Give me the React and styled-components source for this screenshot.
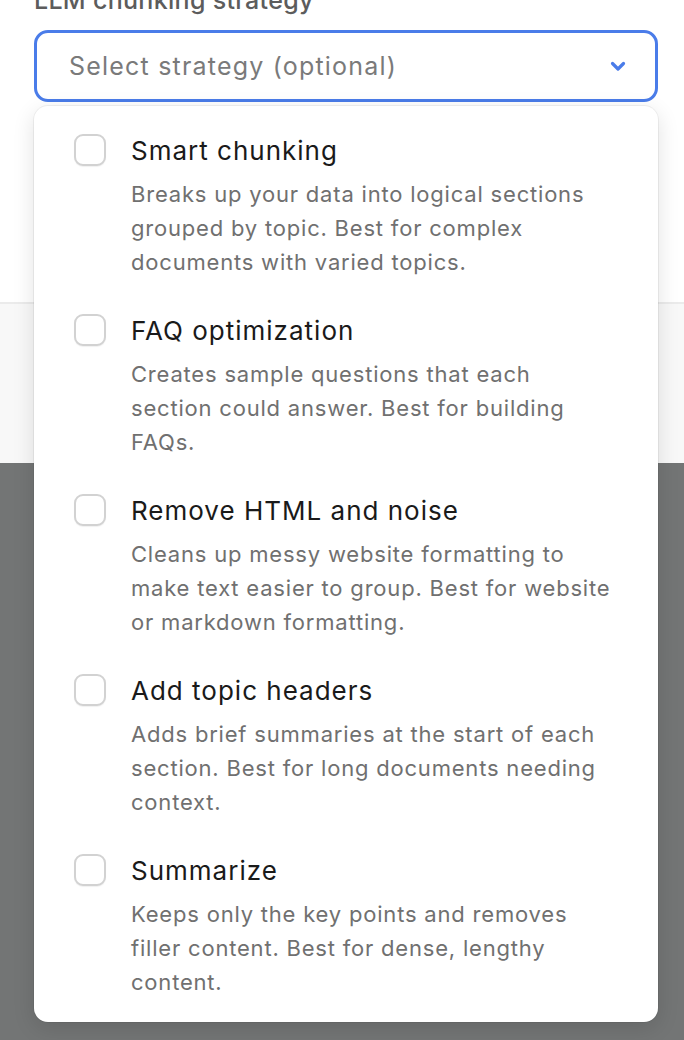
import React from "react";
import styled, { createGlobalStyle } from "styled-components";

const GlobalStyle = createGlobalStyle`
  html, body {
    margin: 0;
    padding: 0;
    background: #737575;
    overflow: hidden;
  }
  * {
    box-sizing: border-box;
  }
`;

const Backdrop = styled.div`
  min-height: 1040px;
  background: #737575;
`;

const Modal = styled.div`
  margin: 0 -20px;
  background: #fff;
  border-radius: 0 0 18px 18px;
`;

const Body = styled.div`
  display: flow-root;
  height: 302px;
  padding: 0 46px 0 54px;
`;

const Footer = styled.div`
  height: 161px;
  background: #f8f8f8;
  border-top: 2px solid #ebebeb;
  border-radius: 0 0 18px 18px;
`;

const Label = styled.div`
  margin-top: -14px;
  font-family: Inter, Roboto, sans-serif;
  font-size: 25px;
  line-height: 28px;
  font-weight: 500;
  letter-spacing: 0.3px;
  color: #5c5c5c;
`;

const Field = styled.div`
  position: relative;
  margin-top: 16px;
`;

const Select = styled.div`
  height: 72px;
  display: flex;
  align-items: center;
  justify-content: space-between;
  padding: 0 29px 0 32px;
  border: 3px solid #4a7ce9;
  border-radius: 14px;
  background: #fff;
  font-family: Inter, Roboto, sans-serif;
  font-size: 25px;
  letter-spacing: 1.2px;
  color: #7a7a7a;
`;

const Menu = styled.div`
  position: absolute;
  top: calc(100% + 4px);
  left: 0;
  right: 0;
  display: flex;
  flex-direction: column;
  gap: 35px;
  padding: 28px 24px 23px 40px;
  background: #fff;
  border-radius: 14px;
  box-shadow: 0 0 0 1px rgba(0, 0, 0, 0.05), 0 6px 22px rgba(0, 0, 0, 0.12);
`;

const Option = styled.div`
  display: grid;
  grid-template-columns: 32px 1fr;
  column-gap: 25px;
  font-family: Inter, Lato, sans-serif;
`;

const Box = styled.div`
  width: 32px;
  height: 32px;
  border: 2px solid #d2d2d2;
  border-radius: 9px;
  background: #fff;
  box-shadow: 0 1px 1px rgba(0, 0, 0, 0.06);
`;

const Title = styled.div`
  font-size: 26px;
  line-height: 34px;
  letter-spacing: 1px;
  color: #1a1a1a;
`;

const Desc = styled.div`
  grid-column: 2;
  margin-top: 9px;
  font-size: 22px;
  line-height: 34px;
  letter-spacing: 0.8px;
  color: #707070;
  white-space: nowrap;
`;

const Chevron = () => (
  <svg width="16" height="11" viewBox="0 0 16 11">
    <polyline
      points="2.5,2.5 8,8 13.5,2.5"
      fill="none"
      stroke="#4a7ce9"
      strokeWidth="3.2"
      strokeLinecap="round"
      strokeLinejoin="round"
    />
  </svg>
);

const options = [
  {
    title: "Smart chunking",
    lines: [
      "Breaks up your data into logical sections",
      "grouped by topic. Best for complex",
      "documents with varied topics.",
    ],
  },
  {
    title: "FAQ optimization",
    lines: [
      "Creates sample questions that each",
      "section could answer. Best for building",
      "FAQs.",
    ],
  },
  {
    title: "Remove HTML and noise",
    lines: [
      "Cleans up messy website formatting to",
      "make text easier to group. Best for website",
      "or markdown formatting.",
    ],
  },
  {
    title: "Add topic headers",
    lines: [
      "Adds brief summaries at the start of each",
      "section. Best for long documents needing",
      "context.",
    ],
  },
  {
    title: "Summarize",
    lines: [
      "Keeps only the key points and removes",
      "filler content. Best for dense, lengthy",
      "content.",
    ],
  },
];

export default function App() {
  return (
    <Backdrop>
      <GlobalStyle />
      <Modal>
        <Body>
          <Label>LLM chunking strategy</Label>
          <Field>
            <Select>
              <span>Select strategy (optional)</span>
              <Chevron />
            </Select>
            <Menu>
              {options.map((o) => (
                <Option key={o.title}>
                  <Box />
                  <Title>{o.title}</Title>
                  <Desc>
                    {o.lines.map((l, i) => (
                      <React.Fragment key={i}>
                        {l}
                        {i < o.lines.length - 1 && <br />}
                      </React.Fragment>
                    ))}
                  </Desc>
                </Option>
              ))}
            </Menu>
          </Field>
        </Body>
        <Footer />
      </Modal>
    </Backdrop>
  );
}
